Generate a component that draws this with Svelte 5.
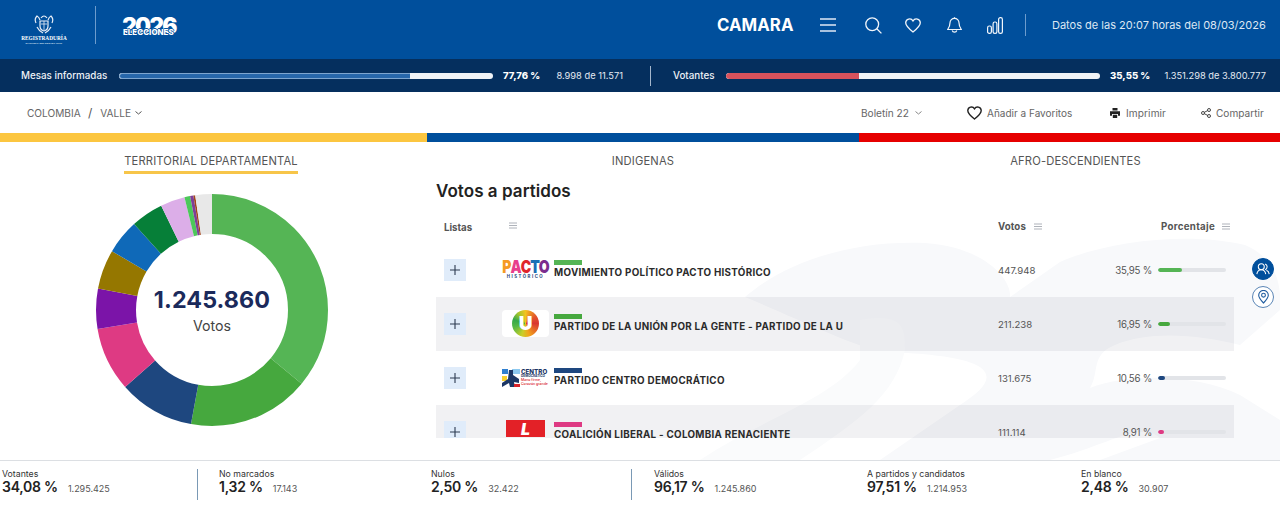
<script>
  const slices = [
    ['#55b555', 35.95], ['#46a83e', 16.95], ['#1e477f', 10.56], ['#de3a83', 8.91],
    ['#7b14a8', 5.6], ['#957700', 5.5], ['#0f69b8', 4.8], ['#067f38', 4.5],
    ['#dcaee8', 3.4], ['#4cc85a', 0.8], ['#7d3f98', 0.45], ['#a2451c', 0.25], ['#e8e8e8', 2.33]
  ];
  let acc = 0;
  const arcs = slices.map(([color, v]) => { const a = { color, v, start: acc }; acc += v; return a; });
  const rows = [
    { id: 'pacto', chip: '#55b555', name: 'MOVIMIENTO POLÍTICO PACTO HISTÓRICO', votes: '447.948', pct: '35,95 %', p: 35.95 },
    { id: 'u', chip: '#46a83e', name: 'PARTIDO DE LA UNIÓN POR LA GENTE - PARTIDO DE LA U', votes: '211.238', pct: '16,95 %', p: 16.95 },
    { id: 'cd', chip: '#1e477f', name: 'PARTIDO CENTRO DEMOCRÁTICO', votes: '131.675', pct: '10,56 %', p: 10.56 },
    { id: 'lib', chip: '#de3a83', name: 'COALICIÓN LIBERAL - COLOMBIA RENACIENTE', votes: '111.114', pct: '8,91 %', p: 8.91 }
  ];
  const stats = [
    ['Votantes', '34,08 %', '1.295.425', 's1'], ['No marcados', '1,32 %', '17.143', 's2'],
    ['Nulos', '2,50 %', '32.422', 's3'], ['Válidos', '96,17 %', '1.245.860', 's4'],
    ['A partidos y candidatos', '97,51 %', '1.214.953', 's5'], ['En blanco', '2,48 %', '30.907', 's6']
  ];
</script>

{#snippet lines(color)}
  <svg class="mini" viewBox="0 0 8 7" width="8" height="7"><path d="M0 1h8M0 3.5h8M0 6h8" stroke={color} stroke-width="0.8" fill="none"/></svg>
{/snippet}

<div class="page">
  <header class="top">
    <div class="reg">
      <svg width="22" height="20" viewBox="0 0 22 20" fill="none" stroke="#e8eef7" stroke-width="1.2">
        <path d="M7 7h8v5q0 4-4 5q-4-1-4-5z"/><path d="M3 9q-2-4 1-7q2 1 3 4M19 9q2-4-1-7q-2 1-3 4M8 4q3-4 6 0M4 13q2 4 6 6M18 13q-2 4-6 6"/><path d="M8 10h6M11 7v9" stroke-width=".8"/>
      </svg>
      <span class="regname">REGISTRADURÍA</span>
      <span class="regsub">NACIONAL DEL ESTADO CIVIL</span>
    </div>
    <i class="vline big"></i>
    <div class="elec"><span class="yr">2026</span><span class="elc">ELECCIONES</span></div>
    <div class="grow"></div>
    <strong class="camara">CAMARA</strong>
    <svg class="ic hamb" width="16" height="14" viewBox="0 0 16 14" fill="none" stroke="#dfe9f5" stroke-width="1.3"><path d="M0 1h16M0 7h16M0 13h16"/></svg>
    <svg class="ic search" width="17" height="17" viewBox="0 0 17 17" fill="none" stroke="#f2f6fb" stroke-width="1.3"><circle cx="7.2" cy="7.2" r="6.4"/><path d="M11.8 11.8l4.6 4.6"/></svg>
    <svg class="ic heart" width="16" height="15" viewBox="0 0 16 15" fill="none" stroke="#f2f6fb" stroke-width="1.3"><path d="M8 14C3 10 .7 7.7.7 4.8A3.9 3.9 0 0 1 8 3a3.9 3.9 0 0 1 7.3 1.8C15.300 7.700 13 10 8 14z"/></svg>
    <svg class="ic bell" width="15" height="17" viewBox="0 0 15 17" fill="none" stroke="#f2f6fb" stroke-width="1.2"><path d="M7.500 1.300a4.500 4.500 0 0 0-4.500 4.500c0 3.500-1 5-2.300 6.700h13.600C13 10.800 12 9.300 12 5.800a4.500 4.500 0 0 0-4.500-4.500z"/><path d="M5.200 13.500a2.400 2.400 0 0 0 4.600 0M7.500 .3v1"/></svg>
    <svg class="ic bars" width="16" height="17" viewBox="0 0 16 17" fill="none" stroke="#f2f6fb" stroke-width="1.2"><rect x=".6" y="9" width="3.800" height="7.400" rx="1.700"/><rect x="6.100" y="5" width="3.800" height="11.400" rx="1.700"/><rect x="11.600" y=".7" width="3.800" height="15.700" rx="1.700"/></svg>
    <i class="vline small"></i>
    <span class="datos">Datos de las 20:07 horas del 08/03/2026</span>
  </header>

  <div class="sub">
    <span class="lb w1">Mesas informadas</span>
    <div class="track"><div class="fill blue" style="width:77.76%"></div></div>
    <b class="sp p1">77,76 %</b>
    <span class="nn n1">8.998 de 11.571</span>
    <i class="subdiv"></i>
    <span class="lb w2">Votantes</span>
    <div class="track"><div class="fill red" style="width:35.55%"></div></div>
    <b class="sp p2">35,55 %</b>
    <span class="nn n2">1.351.298 de 3.800.777</span>
  </div>

  <nav class="crumbs">
    <span class="c1">COLOMBIA</span><span class="slash">/</span><span class="c2">VALLE</span>
    <svg class="chev c-a" width="7" height="4" viewBox="0 0 7 4" fill="none" stroke="#555" stroke-width="1"><path d="M.5.500l3 2.500 3-2.500"/></svg>
    <div class="grow"></div>
    <span class="act bol">Boletín 22</span>
    <svg class="chev c-b" width="7" height="4" viewBox="0 0 7 4" fill="none" stroke="#888" stroke-width="1"><path d="M.5.500l3 2.500 3-2.500"/></svg>
    <svg class="a-h" width="15" height="14" viewBox="0 0 16 15" fill="none" stroke="#222" stroke-width="1.500"><path d="M8 14C3 10 .8 7.700.8 4.800A3.900 3.900 0 0 1 8 3a3.900 3.900 0 0 1 7.200 1.800C15.200 7.700 13 10 8 14z"/></svg>
    <span class="act fav">Añadir a Favoritos</span>
    <svg class="a-p" width="10" height="10" viewBox="0 0 10 10" fill="#222"><path d="M2.500 0h5v2.500h-5zM0 3.200h10v4.600H8V6H2v1.800H0zM2.800 6.800h4.400V10H2.800z"/></svg>
    <span class="act imp">Imprimir</span>
    <svg class="a-s" width="10" height="10" viewBox="0 0 10 10" fill="none" stroke="#333" stroke-width=".9"><circle cx="2" cy="5" r="1.500"/><circle cx="8" cy="2" r="1.500"/><circle cx="8" cy="8" r="1.500"/><path d="M3.300 4.300l3.400-1.700M3.300 5.700l3.400 1.700"/></svg>
    <span class="act com">Compartir</span>
  </nav>

  <div class="tri"><i class="ty"></i><i class="tb"></i><i class="tr"></i></div>

  <main class="main">
    <svg class="wm" width="1280" height="318" viewBox="0 142 1280 318" fill="#f8f9fb" aria-hidden="true">
      <path d="M745 297C790 258 860 240 925 243C985 247 1012 280 1010 297L1060 262C1110 240 1190 232 1245 245C1285 262 1280 300 1280 310L1240 345C1200 335 1150 330 1115 345C1090 355 1100 372 1090 388C1130 372 1200 375 1240 395L1280 420V460H1100L1160 438C1140 420 1110 445 1050 460H880L960 405C1000 380 1010 355 880 352C840 340 800 320 745 297Z"/>
      <path d="M860 320C905 312 905 330 905 350C895 395 860 420 800 460L700 460C760 420 830 400 860 360Z" fill="#fafbfc"/>
    </svg>
    <div class="tabs">
      <div class="tab"><span class="on">TERRITORIAL DEPARTAMENTAL</span></div>
      <div class="tab"><span>INDIGENAS</span></div>
      <div class="tab"><span>AFRO-DESCENDIENTES</span></div>
    </div>
    <div class="content">
      <section class="left">
        <div class="donut">
          <svg width="232" height="232" viewBox="0 0 232 232">
            <g transform="rotate(-90 116 116)">
              {#each arcs as a}
                <circle cx="116" cy="116" r="96" fill="none" stroke={a.color} stroke-width="40" pathLength="100" stroke-dasharray="{a.v} {100 - a.v}" stroke-dashoffset={-a.start}/>
              {/each}
            </g>
          </svg>
          <div class="dc"><b>1.245.860</b><span>Votos</span></div>
        </div>
      </section>
      <section class="right">
        <h2>Votos a partidos</h2>
        <div class="head">
          <span class="h-l">Listas</span>
          <span class="h-i">{@render lines('#9a9fa8')}</span>
          <span class="h-v">Votos {@render lines('#9a9fa8')}</span>
          <span class="h-p">Porcentaje {@render lines('#9a9fa8')}</span>
        </div>
        <div class="rows">
          {#each rows as r, i}
            <div class="row" class:alt={i % 2 === 1}>
              <button class="plus" aria-label="Expandir"><svg width="10" height="10" viewBox="0 0 10 10" stroke="#2c3a50" stroke-width="1.100"><path d="M5 0v10M0 5h10"/></svg></button>
              <div class="logo">
                {#if r.id === 'pacto'}
                  <div class="pacto"><div class="pw"><span class="pp">P</span><span class="pa">A</span><span class="pc">C</span><span class="pt">T</span><span class="po">O</span></div><div class="ph">HISTÓRICO</div></div>
                {:else if r.id === 'u'}
                  <div class="ubox"><div class="uc"><span>U</span></div></div>
                {:else if r.id === 'cd'}
                  <div class="cd">
                    <svg width="18" height="18" viewBox="0 0 18 18"><rect width="18" height="18" fill="#fff"/><path d="M0 0h6v5H0z" fill="#2f7fd0"/><path d="M10 0h8v5h-8z" fill="#8cc8ef"/><path d="M0 7h5v5H0zM0 0" fill="#f7cf2f"/><path d="M7 1h4v5l6 4v4l-5-1 1 5H8l-1-4-7 4v-4l6-4z" fill="#1c3766"/><path d="M12 15h6v3h-6z" fill="#d8232a"/></svg>
                    <div class="cdt"><b>CENTRO</b><em>DEMOCRÁTICO</em><small>Mano firme,</small><small>Corazón grande</small></div>
                  </div>
                {:else}
                  <div class="lib"><span>L</span></div>
                {/if}
              </div>
              <div class="nm"><i class="chip" style="background:{r.chip}"></i><b>{r.name}</b></div>
              <span class="vt">{r.votes}</span>
              <span class="pc-t">{r.pct}</span>
              <div class="ptrack"><div class="pfill" style="width:{r.p}%;background:{r.chip}"></div></div>
            </div>
          {/each}
        </div>
      </section>
    </div>
    <div class="side">
      <button class="sb on" aria-label="Partidos"><svg width="14" height="12" viewBox="0 0 16 14" fill="none" stroke="#fff" stroke-width="1.200"><circle cx="6" cy="4.500" r="3.500"/><path d="M.8 13c.5-3 2.500-5 5.200-5s4.700 2 5.200 5M10.500 1.200a3.500 3.500 0 0 1 0 6.600M12 8.500c1.800.6 3 2.300 3.300 4.500"/></svg></button>
      <button class="sb" aria-label="Territorio"><svg width="11" height="14" viewBox="0 0 11 14" fill="none" stroke="#1f5c9f" stroke-width="1.100"><path d="M5.500 13C2.500 9.800.7 7.700.7 5.200a4.800 4.800 0 0 1 9.600 0c0 2.500-1.800 4.600-4.800 7.800z"/><circle cx="5.500" cy="5.200" r="1.900"/></svg></button>
    </div>
  </main>

  <footer class="foot">
    {#each stats as s}
      <div class="stat {s[3]}">
        <span class="sl">{s[0]}</span>
        <div class="sv"><b>{s[1]}</b><span>{s[2]}</span></div>
      </div>
    {/each}
  </footer>
</div>

<style>
  :global(body) { margin: 0; background: #fff; }
  .page { width: 1280px; height: 508px; overflow: hidden; font-family: Inter, "Noto Sans", sans-serif; color: #333; }
  .grow { flex: 1; }
  i { display: block; font-style: normal; }

  .top { height: 59px; background: #004f9c; display: flex; align-items: center; padding: 0 15px 0 21px; box-sizing: border-box; color: #fff; }
  .reg { width: 46px; display: flex; flex-direction: column; align-items: center; margin-top: -1px; }
  .regname { font: 700 5.300px/7px "Liberation Serif", serif; white-space: nowrap; letter-spacing: .05px; margin-top: 1px; }
  .regsub { font: 700 2.500px/3px "Liberation Sans", sans-serif; white-space: nowrap; color: #dfe8f4; }
  .vline { background: #6d9ccd; width: 1px; }
  .vline.big { height: 38px; margin: -9px 0 0 28px; }
  .elec { position: relative; width: 54px; height: 22px; margin: -8px 0 0 26px; }
  .yr { display: block; font: 900 22.500px/21px Inter, sans-serif; letter-spacing: -1.700px; color: #fff; text-align: center; }
  .elc { position: absolute; left: 1px; top: 13px; font: 800 7.900px/9px Inter, sans-serif; padding: 0; letter-spacing: .05px; white-space: nowrap; text-shadow: 0 -1px 0 #004f9c, 1px 0 0 #004f9c, -1px 0 0 #004f9c; }
  .camara { font-size: 16.800px; font-weight: 700; letter-spacing: .05px; margin-top: -9px; width: 76px; white-space: nowrap; }
  .ic { flex: none; margin-top: -9px; }
  .hamb { margin-left: 27px; }
  .search { margin-left: 29px; }
  .heart { margin-left: 23px; }
  .bell { margin-left: 26px; }
  .bars { margin-left: 25px; }
  .vline.small { height: 22px; margin: -9px 0 0 22px; background: #6d9ccd; }
  .datos { margin: -9px 0 0 26px; font-size: 11px; color: #dde7f3; white-space: nowrap; width: 213px; flex: none; text-align: right; }

  .sub { height: 33px; background: #052f5e; display: flex; align-items: center; color: #eef2f7; padding-left: 21px; box-sizing: border-box; font-size: 9.800px; white-space: nowrap; }
  .lb { font-weight: 500; }
  .w1 { width: 98px; }
  .w2 { width: 53px; margin-left: 22px; }
  .track { width: 374px; height: 6px; background: #f0f3f7; border-radius: 3px; overflow: hidden; box-sizing: border-box; flex: none; }
  .fill { height: 100%; box-sizing: border-box; border-radius: 3px 0 0 3px; }
  .blue { background: #2767ab; border: 1px solid #7ea6d0; border-right: 0; }
  .red { background: #d8525c; }
  .sp { font-weight: 800; color: #fff; width: 37px; font-size: 9.600px; }
  .p1 { margin-left: 10px; }
  .p2 { margin-left: 10px; }
  .nn { color: #e4eaf2; text-align: right; font-size: 9.300px; }
  .n1 { margin-left: 16px; width: 67px; }
  .n2 { margin-left: 17px; width: 102px; }
  .subdiv { width: 1px; height: 20px; background: #a5b7cc; margin-left: 27px; }

  .crumbs { height: 41px; display: flex; align-items: center; padding: 0 15px 0 27px; box-sizing: border-box; font-size: 10.100px; color: #666; white-space: nowrap; }
  .c1 { width: 53px; }
  .slash { margin-left: 8px; font-size: 12px; color: #555; }
  .c2 { margin-left: 8px; width: 31px; }
  .c-a { margin-left: 4px; }
  .bol { width: 48px; }
  .c-b { margin-left: 6px; }
  .a-h { margin-left: 45px; }
  .fav { margin-left: 5px; width: 85px; font-size: 10px; }
  .a-p { margin-left: 38px; }
  .imp { margin-left: 6px; width: 42px; letter-spacing: .1px; }
  .a-s { margin-left: 33px; }
  .com { margin-left: 5px; width: 49px; }

  .tri { height: 9px; display: grid; grid-template-columns: 427px 432px 421px; }
  .ty { background: #fcc640; }
  .tb { background: #004f9c; }
  .tr { background: #e60000; }

  .main { position: relative; height: 318px; overflow: hidden; }
  .wm { position: absolute; left: 0; top: 0; }
  .tabs { position: relative; display: grid; grid-template-columns: 427px 432px 421px; height: 38px; padding-top: 12px; box-sizing: border-box; }
  .tab { text-align: center; font-size: 11.200px; color: #555; letter-spacing: .15px; }
  .tab span { display: inline-block; padding-bottom: 2px; line-height: 15px; white-space: nowrap; }
  .tab:first-child { padding-right: 5px; }
  .tab:last-child { padding-left: 12px; }
  .tab .on { border-bottom: 3px solid #f7c549; }

  .content { position: relative; display: flex; }
  .left { width: 427px; flex: none; padding: 14px 0 0 96px; box-sizing: border-box; }
  .donut { position: relative; width: 232px; height: 232px; }
  .donut svg { display: block; }
  .dc { position: absolute; left: 0; right: 0; top: 91px; text-align: center; display: flex; flex-direction: column; align-items: center; }
  .dc b { font-size: 23.300px; line-height: 30px; color: #1b2a5b; font-weight: 700; letter-spacing: .1px; }
  .dc span { font-size: 14.200px; line-height: 18px; color: #444; margin-top: 2px; }

  .right { width: 798px; flex: none; margin-left: 9px; }
  h2 { margin: 0; font-size: 17px; line-height: 22px; font-weight: 600; color: #222; letter-spacing: .05px; }
  .head { display: flex; height: 34px; align-items: center; font-size: 9.700px; font-weight: 700; color: #555; margin-top: 7px; box-sizing: border-box; position: relative; white-space: nowrap; }
  .h-l { margin-left: 8px; width: 65px; padding-top: 3px; }
  .h-i { display: flex; margin-top: -2px; width: 489px; }
  .h-v { width: 163px; display: flex; gap: 8px; align-items: center; letter-spacing: .1px; }
  .h-p { display: flex; gap: 7px; align-items: center; letter-spacing: .3px; }
  .mini { flex: none; }

  .rows { height: 195px; overflow: hidden; }
  .row { height: 54px; display: flex; align-items: center; position: relative; }
  .row.alt { background: rgba(25, 35, 65, .062); }
  .plus { width: 22px; height: 22px; margin: -1px 0 0 8px; flex: none; background: #e0ecfa; border: 0; padding: 0; display: flex; align-items: center; justify-content: center; }
  .logo { width: 47px; margin-left: 36px; flex: none; display: flex; align-items: center; justify-content: center; height: 27px; margin-top: -1px; }
  .nm { margin-left: 5px; width: 444px; flex: none; height: 24px; margin-top: 3px; display: flex; flex-direction: column; }
  .chip { width: 28px; height: 5px; flex: none; }
  .nm b { font-size: 9.800px; line-height: 14px; margin-top: 1px; font-weight: 700; color: #2b2b2b; white-space: nowrap; letter-spacing: .3px; }
  .vt { font-size: 9.600px; color: #555; width: 96px; }
  .pc-t { font-size: 9.700px; letter-spacing: -.25px; color: #555; width: 58px; text-align: right; }
  .ptrack { width: 68px; height: 4px; margin: 0 0 0 6px; background: #e2e4e8; border-radius: 2px; overflow: hidden; flex: none; }
  .pfill { height: 100%; border-radius: 2px; }

  .pacto { width: 47px; text-align: center; }
  .pw { display: flex; font: 900 18px/14px Inter, sans-serif; letter-spacing: -1.300px; justify-content: center; transform: scaleX(.78); white-space: nowrap; }
  .pp { color: #f59a23; }
  .pa { color: #e83e8c; }
  .pc { color: #e0262b; }
  .pt { color: #1a6fb5; }
  .po { color: #7b2d8e; }
  .ph { font: 700 4.300px/6px Inter, sans-serif; letter-spacing: 1.500px; color: #1c3f78; white-space: nowrap; }
  .ubox { width: 47px; height: 27px; background: #fff; border-radius: 4px; display: flex; align-items: center; justify-content: center; }
  .uc { width: 27px; height: 27px; border-radius: 50%; background: conic-gradient(#f4c21f, #e2542b 15%, #d9362f 25%, #f2a31c 45%, #c9cf28 55%, #55b846 70%, #35a84a 80%, #a3c62f 90%, #f4c21f); display: flex; align-items: center; justify-content: center; }
  .uc span { font: 900 19px/20px Inter, sans-serif; color: #fff; }
  .cd { display: flex; width: 47px; height: 18px; gap: 1px; }
  .cd svg { flex: none; }
  .cdt { display: flex; flex-direction: column; white-space: nowrap; }
  .cdt b { font: 800 6.200px/6.500px Inter, sans-serif; color: #1c3766; }
  .cdt em { font: 700 3.200px/3.800px Inter, sans-serif; color: #1c3766; }
  .cdt small { font: 500 3.500px/3.800px Inter, sans-serif; color: #d8232a; }
  .lib { position: relative; width: 39px; height: 17px; background: #e32127; display: flex; align-items: center; justify-content: center; margin-top: -6px; }
  .lib::after { content: ""; position: absolute; left: 14px; bottom: -5px; width: 11px; height: 4px; background: #f0a23a; }
  .lib span { font: italic 900 16px/16px Inter, sans-serif; color: #fff; }

  .side { position: absolute; left: 1252px; top: 116px; display: flex; flex-direction: column; gap: 6px; }
  .sb { width: 22px; height: 22px; border-radius: 50%; border: 1px solid #5b86b6; background: #fff; display: flex; align-items: center; justify-content: center; padding: 0; box-sizing: border-box; }
  .sb.on { background: #004f9c; border-color: #004f9c; }

  .foot { height: 48px; border-top: 1px solid #dcdfe3; box-sizing: border-box; display: flex; background: #fff; padding-top: 8px; white-space: nowrap; position: relative; }
  .stat { height: 31px; box-sizing: border-box; flex: none; display: flex; flex-direction: column; }
  .sl { font-size: 8.750px; line-height: 10px; color: #333; }
  .sv { display: flex; align-items: baseline; line-height: 16px; margin-top: 0; }
  .sv b { font-size: 14px; color: #222; font-weight: 600; letter-spacing: -.25px; }
  .sv span { font-size: 9px; color: #555; margin-left: 10px; }
  .s1 { width: 198px; padding-left: 2px; border-right: 1px solid #7a99b5; margin-right: 21px; }
  .s2 { width: 212px; }
  .s3 { width: 201px; border-right: 1px solid #7a99b5; margin-right: 22px; }
  .s4 { width: 213px; }
  .s5 { width: 214px; }
  .s6 { width: 199px; }
</style>
